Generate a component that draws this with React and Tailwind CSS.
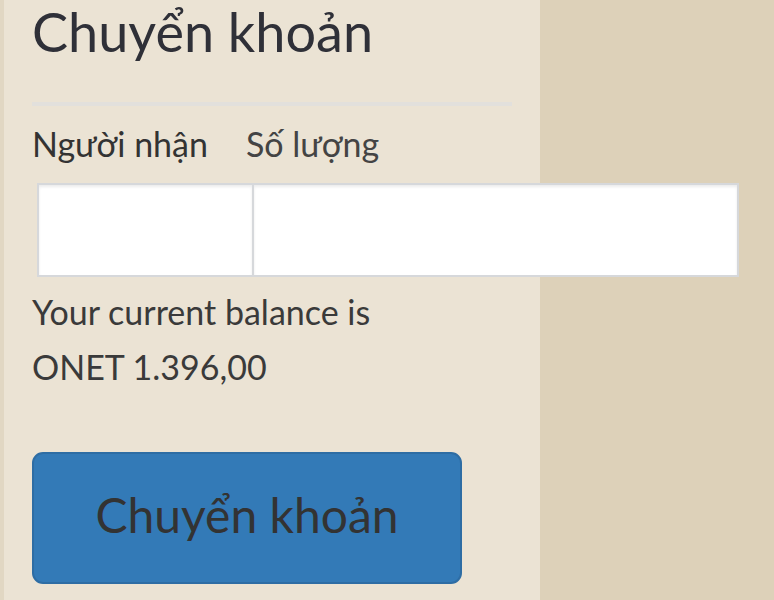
export default function App() {
  return (
    <div className="flex h-[600px] w-full overflow-hidden bg-[#ddd1b9] font-['Lato','Open_Sans',sans-serif] text-[#333]">
      {/* transfer panel */}
      <div className="w-[540px] shrink-0 border-l-4 border-[#e1d7c3] bg-[#ebe3d4] pl-[28px]">
        <h1 className="h-[64px] text-[54px] leading-[64px] font-normal text-[#2f3038]">Chuyển khoản</h1>
        <div className="mt-[38px] h-[4px] w-[480px] bg-[#e2e0dc]" />

        <div className="mt-[18px] flex h-[40px] text-[34px] leading-[40px]">
          <label>Người nhận</label>
          <label className="ml-[38px] text-[#444]">Số lượng</label>
        </div>

        <div className="relative z-10 mt-[19px] ml-[5px] flex h-[94px] w-[702px]">
          <input
            type="text"
            className="h-full w-[215px] border-2 border-r-0 border-[#d6d8db] bg-white shadow-[inset_0_2px_3px_rgba(0,0,0,0.08)] outline-none"
          />
          <input
            type="text"
            className="h-full w-[487px] border-2 border-[#d6d8db] bg-white shadow-[inset_0_2px_3px_rgba(0,0,0,0.08)] outline-none"
          />
        </div>

        <div className="mt-[7px] text-[34px] leading-[55px] text-[#3a3a3a]">
          <p>Your current balance is</p>
          <p>ONET 1.396,00</p>
        </div>

        <button className="mt-[58px] flex h-[132px] w-[430px] items-center justify-center rounded-[11px] border-2 border-[#2e6da4] bg-[#337ab7] pb-[6px] text-[48px] text-[#333]">
          Chuyển khoản
        </button>
      </div>
    </div>
  )
}
